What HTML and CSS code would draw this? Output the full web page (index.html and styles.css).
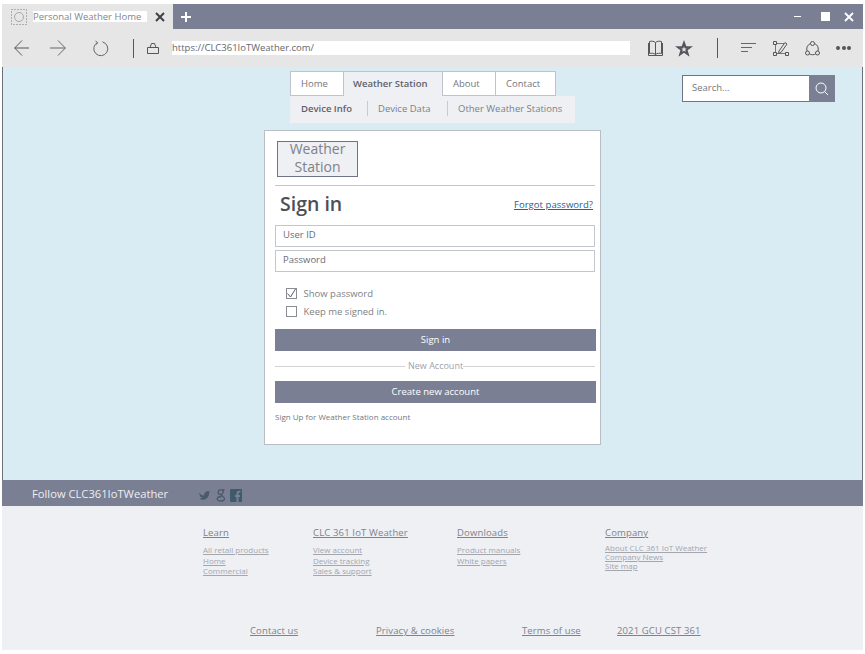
FILE: index.html
```html
<!DOCTYPE html>
<html lang="en">
<head>
<meta charset="utf-8">
<title>Personal Weather Home</title>
<link rel="stylesheet" href="styles.css">
</head>
<body>
<div class="window">
  <header class="tabstrip">
    <div class="tab">
      <svg class="favicon" width="16" height="16" viewBox="0 0 16 16"><rect x=".5" y=".5" width="15" height="15" fill="none" stroke="#77767a" stroke-dasharray="1 2"/><circle cx="8" cy="8" r="4.5" fill="none" stroke="#a9a9ad"/></svg>
      <span class="tab-title">Personal Weather Home</span>
      <svg class="tab-close" width="10" height="10" viewBox="0 0 10 10"><path d="M1 1l8 8M9 1l-8 8" stroke="#3f4148" stroke-width="2"/></svg>
    </div>
    <svg class="tab-new" width="10" height="10" viewBox="0 0 10 10"><path d="M5 0v10M0 5h10" stroke="#fff" stroke-width="2"/></svg>
    <div class="window-controls">
      <span class="win-min"></span>
      <span class="win-max"></span>
      <svg class="win-close" width="10" height="10" viewBox="0 0 10 10"><path d="M1 1l8 8M9 1l-8 8" stroke="#fff" stroke-width="1.8"/></svg>
    </div>
  </header>
  <nav class="addressbar">
    <svg class="ic-back" width="15" height="16" viewBox="0 0 15 16"><path d="M8 .5L.7 8l7.300 7.500M.7 8H15" fill="none" stroke="#55565c"/></svg>
    <svg class="ic-fwd" width="16" height="16" viewBox="0 0 16 16"><path d="M8 .5L15.300 8 8 15.500M0 8h15.300" fill="none" stroke="#66676d"/></svg>
    <svg class="ic-reload" width="16" height="17" viewBox="0 0 16 17"><path d="M4.500 2.500A7 7 0 1 0 9.500 1.900M2.500 1l2 1.500-1 2" fill="none" stroke="#66676d"/></svg>
    <span class="bar-sep"></span>
    <svg class="ic-lock" width="12" height="11" viewBox="0 0 12 11"><path d="M.5 4.500h11v6H.5zM3 4.500l1.500-4h3l1.500 4" fill="none" stroke="#55565c"/></svg>
    <div class="url">https://CLC361IoTWeather.com/</div>
    <svg class="ic-book" width="15" height="16" viewBox="0 0 15 16"><path d="M7.500 2.500C6 1 3 1 1.500 1.500v12C3 13 6 13 7.500 14.500 9 13 12 13 13.500 13.500v-12C12 1 9 1 7.500 2.500zM7.500 2.500v12M.5 3v12.500h14V3" fill="none" stroke="#55565c"/></svg>
    <svg class="ic-star" width="18" height="17" viewBox="0 0 18 17"><path fill-rule="evenodd" d="M9 0l2.300 6.200H18l-5.400 4 2 6.500L9 12.800l-5.600 3.900 2-6.500-5.400-4h6.700zM9 6.500l-.8 2H6.300l1.500 1.300-.6 2L9 10.700l1.800 1.100-.6-2 1.500-1.300H9.800z" fill="#55565c"/></svg>
    <span class="bar-sep bar-sep-2"></span>
    <svg class="ic-hub" width="15" height="10" viewBox="0 0 15 10"><path d="M0 .5h15M0 4.500h11M0 8.500h7" stroke="#66676d"/></svg>
    <svg class="ic-note" width="16" height="15" viewBox="0 0 16 15"><path d="M2.500 2.500h9M2.500 2.500v10M2.500 12.500h11" fill="none" stroke="#77787d"/><path d="M.5.500h3v3h-3zM.5 11.500h3v3h-3zM12.500 11.500h3v3h-3z" fill="#e6e6e6" stroke="#55565c"/><path d="M6 10l6-8.500 2 1.500-6 8.500-2.500 1z" fill="#e6e6e6" stroke="#55565c"/></svg>
    <svg class="ic-share" width="15" height="15" viewBox="0 0 15 15"><circle cx="7.500" cy="8" r="5.800" fill="none" stroke="#55565c"/><circle cx="7.500" cy="2.500" r="2" fill="#e6e6e6" stroke="#55565c"/><circle cx="2.500" cy="12" r="2" fill="#e6e6e6" stroke="#55565c"/><circle cx="12.500" cy="12" r="2" fill="#e6e6e6" stroke="#55565c"/></svg>
    <div class="ic-more"><i></i><i></i><i></i></div>
  </nav>

  <main class="content">
    <div class="topnav">
      <div class="menu">
        <ul class="tabs">
          <li class="t-home">Home</li>
          <li class="t-ws active">Weather Station</li>
          <li class="t-about">About</li>
          <li class="t-contact">Contact</li>
        </ul>
        <ul class="subtabs">
          <li class="current">Device Info</li>
          <li class="s-data">Device Data</li>
          <li>Other Weather Stations</li>
        </ul>
      </div>
      <div class="search">
        <div class="search-input">Search...</div>
        <div class="search-btn"><svg width="14" height="14" viewBox="0 0 14 14"><circle cx="6" cy="6" r="5" fill="none" stroke="#fff"/><path d="M9.500 9.500L13 13" stroke="#fff"/></svg></div>
      </div>
    </div>
    <section class="card">
      <div class="logo"><span>Weather<br>Station</span></div>
      <div class="card-rule"></div>
      <div class="signin-head">
        <h1>Sign in</h1>
        <a class="forgot">Forgot password?</a>
      </div>
      <div class="field">User ID</div>
      <div class="field">Password</div>
      <div class="checks">
        <div class="check"><span class="box"><svg width="11" height="11" viewBox="0 0 11 11"><path d="M1.500 5.500L4.500 9 9.500 1" fill="none" stroke="#5b5e68"/></svg></span>Show password</div>
        <div class="check"><span class="box"></span>Keep me signed in.</div>
      </div>
      <div class="btn">Sign in</div>
      <div class="divider"><span>New Account</span></div>
      <div class="btn">Create new account</div>
      <p class="signup">Sign Up for Weather Station account</p>
    </section>
  </main>

  <div class="follow">
    <span class="follow-text">Follow CLC361IoTWeather</span>
    <div class="social">
      <svg class="so-t" width="11" height="9" viewBox="0 0 13 10"><path d="M0 2c2 2 4 3 6 3 0-3 2-5 4-5 1 0 2 .5 3 0l-1 2c0 4-3 8-7 8-2 0-3-.5-4-1.500 1 0 2 0 3-1C2 7 1 6 1 5 .5 4 0 3 0 2z" fill="#4a596c"/></svg>
      <svg class="so-g" width="10" height="13" viewBox="0 0 10 13"><path d="M8.500 .8H4.500C1.500 .8 1.500 5.500 4.500 5.500S8 1.500 6 1M4.500 5.500C7 7.500 8.500 8 8.500 10 8.500 12.500 1.200 12.800 1.200 10 1.200 8 4 7.500 5.500 7.500" fill="none" stroke="#4a596c" stroke-width="1.300"/></svg>
      <svg class="so-f" width="12" height="13" viewBox="0 0 12 13"><path fill-rule="evenodd" d="M1 0h10a1 1 0 0 1 1 1v11a1 1 0 0 1-1 1H8.500V8H10V6H8.500V4.500q0-1 1-1H10.500V1.800H9Q6.500 1.800 6.500 4.500V6H5V8h1.500v5H1a1 1 0 0 1-1-1V1a1 1 0 0 1 1-1z" fill="#3f5a6c"/></svg>
    </div>
  </div>
  <footer class="footer">
    <div class="cols">
      <div class="col col-learn">
        <a class="col-head">Learn</a>
        <a>All retail products</a><a>Home</a><a>Commercial</a>
      </div>
      <div class="col col-clc">
        <a class="col-head">CLC 361 IoT Weather</a>
        <a>View account</a><a>Device tracking</a><a>Sales &amp; support</a>
      </div>
      <div class="col col-down">
        <a class="col-head">Downloads</a>
        <a>Product manuals</a><a>White papers</a>
      </div>
      <div class="col col-comp">
        <a class="col-head">Company</a>
        <a>About CLC 361 IoT Weather</a><a>Company News</a><a>Site map</a>
      </div>
    </div>
    <div class="legal">
      <a class="l1">Contact us</a>
      <a class="l2">Privacy &amp; cookies</a>
      <a class="l3">Terms of use</a>
      <a class="l4">2021 GCU CST 361</a>
    </div>
  </footer>
</div>
</body>
</html>
```
FILE: styles.css
```css
* { box-sizing: border-box; }
html, body { margin: 0; padding: 0; background: #fff; }
body { font-family: "Open Sans", "Noto Sans", sans-serif; color: #6e7078; }
ul { list-style: none; margin: 0; padding: 0; }

.window { width: 861px; height: 650px; margin: 4px 0 0 2px; display: flex; flex-direction: column; overflow: hidden; }

/* browser chrome */
.tabstrip { height: 25px; flex: none; background: #7a7f93; display: flex; align-items: center; color: #fff; }
.tab { width: 171px; height: 25px; background: #e6e6e6; display: flex; align-items: center; padding-left: 9px; }
.favicon { flex: none; }
.tab-title { background: #fff; width: 114px; height: 11px; margin-left: 6px; font-size: 9.500px; line-height: 11px; color: #85868c; white-space: nowrap; overflow: hidden; }
.tab-close { margin-left: 8px; }
.tab-new { margin-left: 8px; }
.window-controls { margin-left: auto; display: flex; align-items: center; padding-right: 9px; }
.win-min { width: 7px; height: 1px; background: #fff; }
.win-max { width: 9px; height: 9px; background: #fff; margin-left: 20px; }
.win-close { margin-left: 14px; }

.addressbar { height: 38px; flex: none; background: #e6e6e6; display: flex; align-items: center; padding-left: 12px; }
.ic-fwd { margin-left: 21px; }
.ic-reload { margin-left: 27px; }
.bar-sep { width: 1px; height: 19px; background: #55565c; margin-left: 24px; }
.ic-lock { margin-left: 13px; }
.url { width: 458px; height: 14px; margin-left: 13px; background: #fff; font-size: 9.500px; line-height: 14px; color: #66676d; white-space: nowrap; }
.ic-book { margin-left: 18px; }
.ic-star { margin-left: 12px; }
.bar-sep-2 { height: 20px; margin-left: 24px; }
.ic-hub { margin-left: 23px; }
.ic-note { margin-left: 17px; }
.ic-share { margin-left: 16px; }
.ic-more { margin-left: 16px; display: flex; gap: 1.500px; }
.ic-more i { width: 4px; height: 4px; border-radius: 50%; background: #55565c; }

/* page */
.content { height: 413px; flex: none; background: #d9ecf3; border-left: 1px solid #6c7078; border-right: 1px solid #6c7078; padding-top: 4px; position: relative; }
.topnav { display: flex; align-items: flex-start; height: 55px; padding-left: 287px; }
.menu { width: 285px; }
.tabs { display: flex; height: 25px; font-size: 9.500px; }
.tabs li { height: 25px; line-height: 23px; background: #fff; border: 1px solid #c0c3cb; border-right: 0; padding-left: 10px; color: #74767e; white-space: nowrap; }
.t-home { width: 53px; }
.tabs .t-ws { width: 99px; padding-left: 9px; }
.t-about { width: 53px; }
.tabs .t-contact { width: 61px; border-right: 1px solid #c0c3cb; }
.tabs li.active { background: #eef0f4; border-bottom: 0; font-weight: 600; color: #5f616a; }
.subtabs { display: flex; align-items: center; height: 27px; padding-bottom: 2px; background: #eef0f4; padding-left: 11px; font-size: 9.500px; }
.subtabs li { border-right: 1px solid #c8cad1; line-height: 15px; color: #7d7f87; white-space: nowrap; }
.subtabs li:last-child { border: 0; }
.subtabs .current { width: 67px; font-weight: 600; color: #5f616a; margin-right: 10px; }
.subtabs .s-data { width: 70px; margin-right: 10px; }
.search { margin-left: 107px; margin-top: 4px; display: flex; width: 153px; height: 27px; }
.search-input { width: 127px; height: 27px; background: #fff; border: 1px solid #6f7484; border-right: 0; padding-left: 9px; font-size: 9.500px; line-height: 24px; color: #74767e; }
.search-btn { width: 26px; height: 27px; background: #7a7f93; display: flex; align-items: center; justify-content: center; }

.card { margin: 4px 0 0 261px; width: 337px; height: 315px; background: #fff; border: 1px solid #b8bfc4; padding: 10px 5px 0 10px; }
.logo { width: 81px; height: 36px; background: #eef0f4; border: 1px solid #6f7484; margin-left: 2px; font-size: 14px; line-height: 18px; text-align: center; color: #7f818a; }
.logo span { display: block; margin-top: -2px; }
.card-rule { height: 1px; background: #c3c6cb; margin: 8px 0 0 0; }
.signin-head { display: flex; justify-content: space-between; align-items: center; height: 36px; margin-bottom: 3px; padding: 0 2px 0 5px; }
.signin-head h1 { margin: 0; font-size: 19.500px; font-weight: 600; color: #4d4f58; line-height: 36px; }
.forgot { font-size: 9.500px; letter-spacing: .05px; color: #27618f; text-decoration: underline; }
.field { height: 22px; margin-bottom: 3px; border: 1px solid #c3c6cb; padding-left: 7px; font-size: 9.500px; line-height: 18px; color: #6a6c74; }
.checks { padding: 9px 0 0 11px; height: 54px; }
.check { display: flex; align-items: center; height: 18px; font-size: 9.500px; color: #7d7f87; gap: 6.500px; }
.box { width: 11px; height: 11px; border: 1px solid #8a8c94; display: block; flex: none; line-height: 0; }
.box svg { display: block; margin: -1px; }
.btn { width: 321px; height: 22px; background: #7a7f93; color: #fff; font-size: 9.500px; line-height: 21px; text-align: center; }
.divider { height: 30px; display: flex; align-items: center; color: #a0a2a8; font-size: 9px; width: 320px; }
.divider span { line-height: 12px; margin-top: -1px; }
.divider::before, .divider::after { content: ""; flex: 1; height: 1px; background: #d0d2d6; }
.divider::before { flex: 0 0 130px; margin-right: 3px; }
.signup { margin: 8px 0 0; font-size: 8px; line-height: 12px; color: #75777f; }

.follow { height: 26px; flex: none; background: #7a7f93; display: flex; align-items: center; padding-left: 30px; }
.follow-text { font-size: 11.200px; color: #eceef2; width: 167px; white-space: nowrap; }
.social { display: flex; align-items: center; padding-top: 4px; }
.so-g { margin-left: 6px; }
.so-f { margin-left: 4px; }

.footer { height: 144px; flex: none; background: #eef0f4; display: flex; flex-direction: column; }
.footer a { display: block; text-decoration: underline; text-underline-offset: 1px; }
.cols { display: flex; padding: 20px 0 0 201px; height: 118px; }
.col { font-size: 8px; line-height: 10.500px; color: #a4a6ae; }
.col .col-head { font-size: 9.500px; letter-spacing: .15px; line-height: 13px; color: #80828b; margin-bottom: 6px; }
.col-learn { width: 110px; }
.col-clc { width: 144px; }
.col-down { width: 148px; }
.col-comp .col-head { margin-bottom: 3.500px; }
.col-comp a:not(.col-head) { line-height: 9px; }
.legal { display: flex; font-size: 9.500px; letter-spacing: .12px; color: #80828b; padding-left: 248px; }
.legal a { white-space: nowrap; }
.l1 { width: 126px; }
.l2 { width: 146px; }
.l3 { width: 95px; }
```
